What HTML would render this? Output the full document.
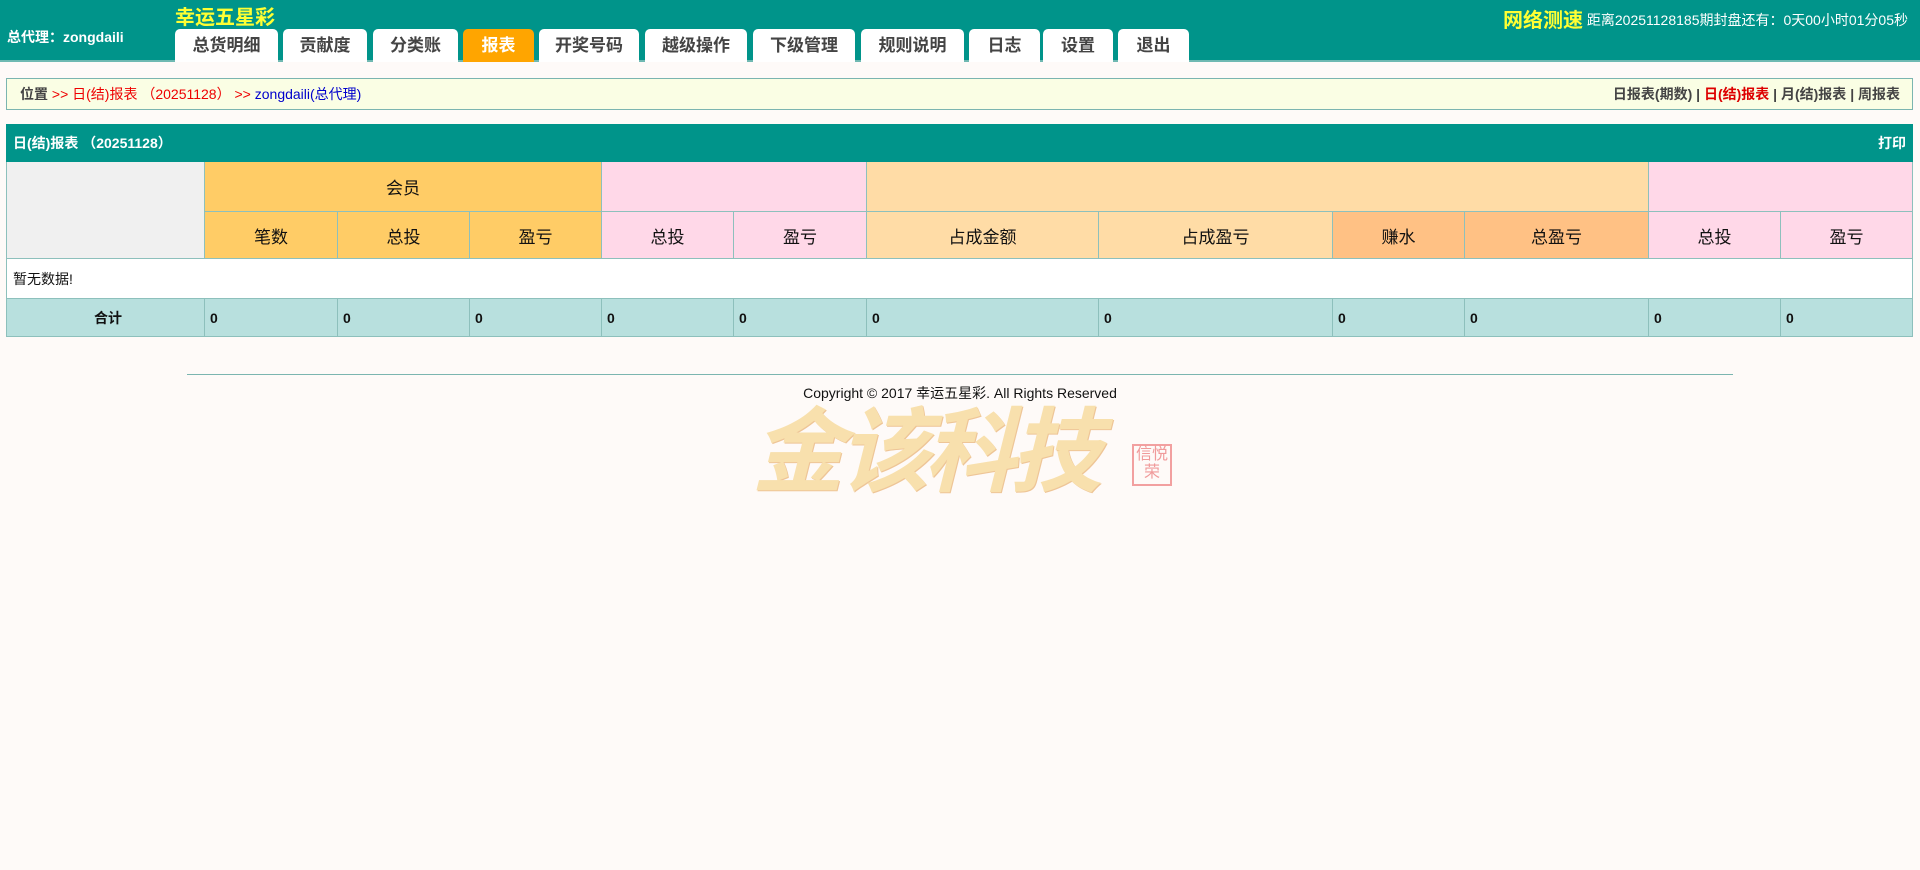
<!DOCTYPE html>
<html><head><meta charset="utf-8"><style>
*{margin:0;padding:0;box-sizing:border-box}
body{width:1920px;height:870px;background:#fefaf8;font-family:"Liberation Sans","Noto Sans CJK SC",sans-serif;position:relative;overflow:hidden;color:#222}
.hd{position:absolute;left:0;top:0;width:1920px;height:62px;background:#00948a;border-bottom:2px solid #6fb9b2}
.ttl{position:absolute;left:175px;top:1px;font-size:20px;font-weight:bold;color:#ffff33}
.ag{position:absolute;left:7px;top:27px;font-size:14px;font-weight:bold;color:#fff}
.tab{position:absolute;top:29px;height:33px;background:#fff;border-radius:5px 5px 0 0;font-size:17px;font-weight:bold;color:#444;text-align:center;line-height:33px}
.tab.on{background:#ffa500;color:#fff}
.sp{position:absolute;right:12px;top:4px;color:#fff;font-size:14px}
.sp b{color:#ffff33;font-size:20px;vertical-align:-2px}
.bc{position:absolute;left:6px;top:78px;width:1907px;height:32px;background:#fafee4;border:1px solid #7bb5b0;font-size:14px;line-height:30px;padding-left:13px}
.bc .r{position:absolute;right:12px;top:0;color:#444}
table{position:absolute;left:6px;top:124px;width:1907px;border-collapse:collapse}
td{border:1px solid #8dc0bc;text-align:center;font-size:17px;color:#111}
.h1 td{height:37px;background:#00948a;border-color:#00948a;color:#fff;font-size:14px;font-weight:bold;text-align:left;padding-left:6px}
.y{background:#ffcc66}.p{background:#ffd8e8}.o{background:#ffdca6}.d{background:#ffc184}.g{background:#f0f0f0}
.tot td{height:38px;background:#b8e0de;font-size:14px;font-weight:bold;text-align:left;padding-left:5px}
.ft{position:absolute;left:187px;top:374px;width:1546px;border-top:1px solid #7bb5b0}
.cp{position:absolute;left:0;width:1920px;top:383px;text-align:center;font-size:14px;color:#111;z-index:2}
.logo{position:absolute;left:752px;top:378px;font-family:"WenQuanYi Zen Hei","Noto Sans CJK SC",sans-serif;font-size:92px;font-weight:bold;color:#f8e0ad;letter-spacing:-6px;font-style:italic;text-shadow:1px 1px 0 #eec597}
.seal{position:absolute;left:1132px;top:444px;width:40px;height:42px;border:2px solid #f2a0a0;color:#f09a9a;font-size:16px;line-height:18px;text-align:center}
</style></head><body>
<div class="hd">
<div class="ttl">幸运五星彩</div>
<div class="ag">总代理：zongdaili</div>
<div class="tab" style="left:175px;width:103px">总货明细</div>
<div class="tab" style="left:283px;width:84px">贡献度</div>
<div class="tab" style="left:373px;width:85px">分类账</div>
<div class="tab on" style="left:463px;width:71px">报表</div>
<div class="tab" style="left:539px;width:100px">开奖号码</div>
<div class="tab" style="left:645px;width:102px">越级操作</div>
<div class="tab" style="left:753px;width:102px">下级管理</div>
<div class="tab" style="left:861px;width:103px">规则说明</div>
<div class="tab" style="left:969px;width:71px">日志</div>
<div class="tab" style="left:1043px;width:70px">设置</div>
<div class="tab" style="left:1118px;width:71px">退出</div>
<div class="sp"><b>网络测速</b> 距离20251128185期封盘还有：0天00小时01分05秒</div>
</div>
<div class="bc"><b style="color:#444">位置</b> <span style="color:#e00">&gt;&gt; 日(结)报表 （20251128）</span> <span style="color:#e00">&gt;&gt;</span> <span style="color:#00c">zongdaili(总代理)</span>
<div class="r"><b>日报表(期数) | <span style="color:#d00">日(结)报表</span> | 月(结)报表 | 周报表</b></div></div>
<table>
<tr class="h1"><td colspan="12">日(结)报表 （20251128）<span style="float:right;padding-right:6px">打印</span></td></tr>
<tr style="height:50px"><td class="g" rowspan="2" style="width:198px"></td><td class="y" colspan="3">会员</td><td class="p" colspan="2"></td><td class="o" colspan="4"></td><td class="p" colspan="2"></td></tr>
<tr style="height:47px"><td class="y" style="width:133px">笔数</td><td class="y" style="width:132px">总投</td><td class="y" style="width:132px">盈亏</td><td class="p" style="width:132px">总投</td><td class="p" style="width:133px">盈亏</td><td class="o" style="width:232px">占成金额</td><td class="o" style="width:234px">占成盈亏</td><td class="d" style="width:132px">赚水</td><td class="d" style="width:184px">总盈亏</td><td class="p" style="width:132px">总投</td><td class="p">盈亏</td></tr>
<tr><td colspan="12" style="height:40px;background:#fff;text-align:left;padding-left:6px;font-size:14px">暂无数据!</td></tr>
<tr class="tot"><td style="text-align:center">合计</td><td>0</td><td>0</td><td>0</td><td>0</td><td>0</td><td>0</td><td>0</td><td>0</td><td>0</td><td>0</td><td>0</td></tr>
</table>
<div class="ft"></div>
<div class="cp">Copyright © 2017 幸运五星彩. All Rights Reserved</div>
<div class="logo">金该科技</div>
<div class="seal">信悦<br>荣</div>
</body></html>
